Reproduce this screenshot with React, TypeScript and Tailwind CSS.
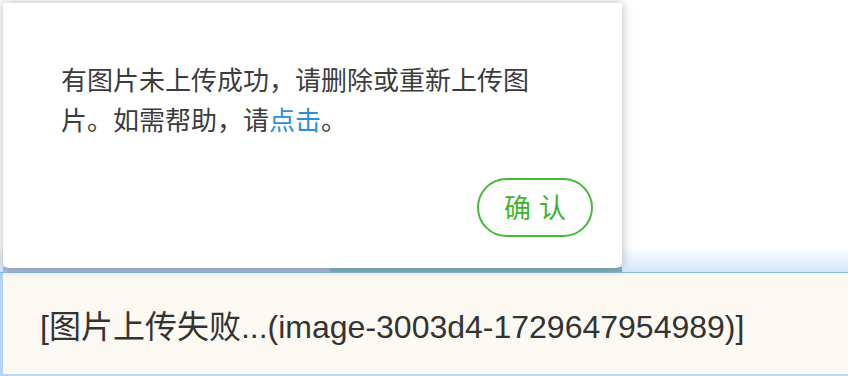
import React from "react";

const CJK = '"Noto Sans CJK SC", "Noto Sans", sans-serif';

export default function App() {
  return (
    <div className="relative h-[376px] w-[848px] overflow-hidden bg-white">
      {/* page behind the dialog */}
      <div className="flex h-full flex-col">
        <div className="h-[272px] bg-[linear-gradient(to_bottom,#ffffff_0px,#ffffff_246px,#d6e7fc_271px)]" />
        <div className="h-px bg-[#8db8ec]" />
        <div className="flex flex-1 items-center border-b-2 border-l-[3px] border-b-[#b9d6f5] border-l-[#b3d3f6] bg-[#fcf9f2] pl-[37px] pt-[6px]">
          <span
            className="text-[32px] leading-none text-[#333]"
            style={{ fontFamily: '"Liberation Sans", "Noto Sans CJK SC", sans-serif' }}
          >
            [图片上传失败...(image-3003d4-1729647954989)]
          </span>
        </div>
      </div>

      {/* strip showing under the dialog edge */}
      <div className="absolute left-[3px] top-[267px] flex h-[5px] w-[619px]">
        <div className="w-[327px] bg-[#a6bfdf]" />
        <div className="flex-1 bg-[#82b3c3]" />
      </div>

      {/* dialog */}
      <div className="absolute left-[3px] top-[3px] flex h-[265px] w-[619px] flex-col rounded-b-[6px] bg-white shadow-[0_0_12px_rgba(0,0,0,0.28)]">
        <p
          className="ml-[58px] mt-[56px] w-[480px] text-[26px] leading-[40px] text-[#3c3c3c]"
          style={{ fontFamily: CJK }}
        >
          有图片未上传成功，请删除或重新上传图片。如需帮助，请
          <span className="text-[#2e8fd6]">点击</span>。
        </p>
        <div className="mt-auto mb-[31px] mr-[29px] flex justify-end">
          <button
            type="button"
            className="flex h-[59px] w-[116px] items-center justify-center rounded-full border-2 border-[#45b935] text-[27px] tracking-[8px] text-[#3fb52f]"
            style={{ fontFamily: CJK }}
          >
            <span className="pl-[8px]">确认</span>
          </button>
        </div>
      </div>
    </div>
  );
}
